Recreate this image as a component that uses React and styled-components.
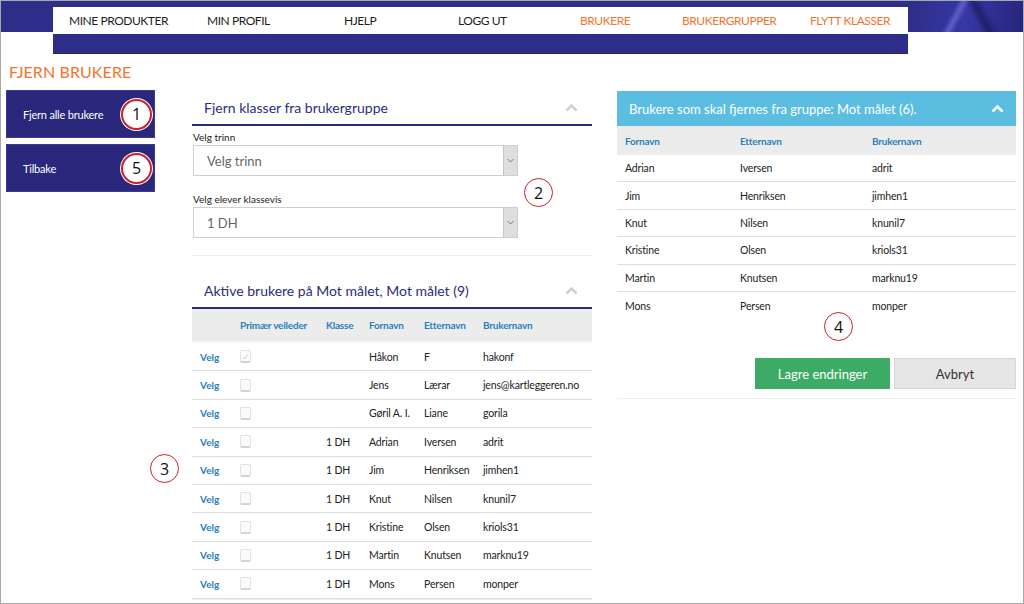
import styled, { createGlobalStyle } from "styled-components";

const GlobalStyle = createGlobalStyle`
  html, body {
    margin: 0;
    padding: 0;
    background: #fff;
  }
  * {
    box-sizing: border-box;
  }
`;

const NAV = [
  { label: "MINE PRODUKTER" },
  { label: "MIN PROFIL" },
  { label: "HJELP" },
  { label: "LOGG UT" },
  { label: "BRUKERE", active: true },
  { label: "BRUKERGRUPPER", active: true },
  { label: "FLYTT KLASSER", active: true },
];

const ACTIVE = [
  { checked: true, klasse: "", fornavn: "Håkon", etternavn: "F", brukernavn: "hakonf" },
  { klasse: "", fornavn: "Jens", etternavn: "Lærar", brukernavn: "jens@kartleggeren.no" },
  { klasse: "", fornavn: "Gøril A. I.", etternavn: "Liane", brukernavn: "gorila" },
  { klasse: "1 DH", fornavn: "Adrian", etternavn: "Iversen", brukernavn: "adrit" },
  { klasse: "1 DH", fornavn: "Jim", etternavn: "Henriksen", brukernavn: "jimhen1" },
  { klasse: "1 DH", fornavn: "Knut", etternavn: "Nilsen", brukernavn: "knunil7" },
  { klasse: "1 DH", fornavn: "Kristine", etternavn: "Olsen", brukernavn: "kriols31" },
  { klasse: "1 DH", fornavn: "Martin", etternavn: "Knutsen", brukernavn: "marknu19" },
  { klasse: "1 DH", fornavn: "Mons", etternavn: "Persen", brukernavn: "monper" },
];

const REMOVE = [
  ["Adrian", "Iversen", "adrit"],
  ["Jim", "Henriksen", "jimhen1"],
  ["Knut", "Nilsen", "knunil7"],
  ["Kristine", "Olsen", "kriols31"],
  ["Martin", "Knutsen", "marknu19"],
  ["Mons", "Persen", "monper"],
];

function ChevronUp({ color = "#d0d0d0" }) {
  return (
    <svg width="13" height="9" viewBox="0 0 13 9">
      <polyline
        points="1.5,7.5 6.5,2.5 11.5,7.5"
        fill="none"
        stroke={color}
        strokeWidth="2.6"
      />
    </svg>
  );
}

function Select({ value }) {
  return (
    <SelectBox>
      <SelectValue>{value}</SelectValue>
      <SelectArrow>
        <svg width="7" height="5" viewBox="0 0 7 5">
          <polyline points="0.5,1 3.5,4 6.5,1" fill="none" stroke="#777" strokeWidth="1" />
        </svg>
      </SelectArrow>
    </SelectBox>
  );
}

export default function App() {
  return (
    <>
      <GlobalStyle />
      <Page>
        <Header>
          <HeaderSide />
          <NavColumn>
            <Nav>
              {NAV.map((n) => (
                <NavItem key={n.label} $active={n.active}>
                  {n.label}
                </NavItem>
              ))}
            </Nav>
            <NavBar />
          </NavColumn>
          <HeaderArt />
        </Header>

        <Title>FJERN BRUKERE</Title>

        <Columns>
          <LeftColumn>
            <SideButton>
              <span>Fjern alle brukere</span>
              <Marker $big>1</Marker>
            </SideButton>
            <SideButton>
              <span>Tilbake</span>
              <Marker $big>5</Marker>
            </SideButton>
          </LeftColumn>

          <MiddleColumn>
            <Panel>
              <PanelHeader>
                <span>Fjern klasser fra brukergruppe</span>
                <ChevronUp />
              </PanelHeader>
              <PanelBody>
                <FieldLabel>Velg trinn</FieldLabel>
                <Select value="Velg trinn" />
                <FieldLabel $gap>Velg elever klassevis</FieldLabel>
                <Select value="1 DH" />
              </PanelBody>
            </Panel>

            <Panel $second>
              <PanelHeader>
                <span>Aktive brukere på Mot målet, Mot målet (9)</span>
                <ChevronUp />
              </PanelHeader>
              <ActiveHead>
                <span />
                <HeadCell>Primær veileder</HeadCell>
                <HeadCell>Klasse</HeadCell>
                <HeadCell>Fornavn</HeadCell>
                <HeadCell>Etternavn</HeadCell>
                <HeadCell>Brukernavn</HeadCell>
              </ActiveHead>
              {ACTIVE.map((r) => (
                <ActiveRow key={r.brukernavn}>
                  <VelgLink>Velg</VelgLink>
                  <Check>{r.checked ? "✓" : ""}</Check>
                  <Cell>{r.klasse}</Cell>
                  <Cell>{r.fornavn}</Cell>
                  <Cell>{r.etternavn}</Cell>
                  <Cell>{r.brukernavn}</Cell>
                </ActiveRow>
              ))}
            </Panel>
          </MiddleColumn>

          <RightColumn>
            <InfoPanel>
              <InfoHeader>
                <span>Brukere som skal fjernes fra gruppe: Mot målet (6).</span>
                <ChevronUp color="#fff" />
              </InfoHeader>
              <RemoveHead>
                <HeadCell>Fornavn</HeadCell>
                <HeadCell>Etternavn</HeadCell>
                <HeadCell>Brukernavn</HeadCell>
              </RemoveHead>
              <RemoveBody>
                {REMOVE.map((r) => (
                  <RemoveRow key={r[2]}>
                    {r.map((c) => (
                      <Cell key={c}>{c}</Cell>
                    ))}
                  </RemoveRow>
                ))}
              </RemoveBody>
              <Actions>
                <SaveButton>Lagre endringer</SaveButton>
                <CancelButton>Avbryt</CancelButton>
              </Actions>
            </InfoPanel>
          </RightColumn>
        </Columns>

        <FloatMarker style={{ left: 523, top: 177 }}>2</FloatMarker>
        <FloatMarker style={{ left: 149, top: 453 }}>3</FloatMarker>
        <FloatMarker style={{ left: 823, top: 311 }}>4</FloatMarker>
      </Page>
    </>
  );
}

const Page = styled.div`
  position: relative;
  width: 1024px;
  height: 604px;
  overflow: hidden;
  border: 1px solid #a8a8a8;
  font-family: Lato, "Open Sans", sans-serif;
  color: #222;
  background: #fff;
`;

const Header = styled.div`
  display: flex;
  height: 54px;
  margin-top: -1px;
`;

const HeaderSide = styled.div`
  width: 52px;
  height: 32px;
  background: #2e2d88;
`;

const NavColumn = styled.div`
  width: 855px;
  display: flex;
  flex-direction: column;
  background: linear-gradient(#2e2d88 0 7px, transparent 7px);
  padding-top: 7px;
`;

const Nav = styled.div`
  display: grid;
  grid-template-columns: 138px 137px 114px 122px 102px 128px auto;
  align-items: center;
  height: 27px;
  padding-left: 16px;
  background: #fff;
`;

const NavItem = styled.div`
  font-size: 12px;
  letter-spacing: -0.45px;
  color: ${(p) => (p.$active ? "#f3742d" : "#1e1e1e")};
`;

const NavBar = styled.div`
  height: 20px;
  background: #2e2d88;
  border-bottom: 1px solid #24236e;
`;

const HeaderArt = styled.div`
  flex: 1;
  height: 32px;
  background:
    linear-gradient(118deg, transparent 38%, rgba(120, 120, 225, 0.6) 43%, transparent 48%),
    linear-gradient(62deg, transparent 55%, rgba(20, 20, 80, 0.6) 62%, transparent 70%),
    linear-gradient(100deg, #2e2d88 0%, #3737a6 50%, #26257a 100%);
`;

const Title = styled.h1`
  margin: 0;
  height: 36px;
  display: flex;
  align-items: center;
  padding: 0 0 2px 8px;
  font-size: 16px;
  font-weight: 400;
  letter-spacing: 0.1px;
  color: #f3742d;
`;

const Columns = styled.div`
  display: flex;
  align-items: flex-start;
  padding-left: 5px;
`;

const LeftColumn = styled.div`
  width: 149px;
  display: flex;
  flex-direction: column;
  gap: 6px;
`;

const SideButton = styled.div`
  height: 48px;
  display: flex;
  align-items: center;
  justify-content: space-between;
  padding: 0 2px 0 16px;
  background: #29287c;
  color: #fff;
  font-size: 11px;
  letter-spacing: -0.2px;
  border: 1px solid #3b3a90;
`;

const Marker = styled.div`
  width: ${(p) => (p.$big ? 31 : 29)}px;
  height: ${(p) => (p.$big ? 31 : 29)}px;
  border-radius: 50%;
  border: 2px solid #c8202e;
  background: #fff;
  color: #111;
  display: flex;
  align-items: center;
  justify-content: center;
  font-family: "Open Sans", sans-serif;
  font-size: 16px;
  box-shadow: ${(p) => (p.$big ? "0 0 0 1px #fff" : "none")};
`;

const FloatMarker = styled(Marker)`
  position: absolute;
  border-width: 1.5px;
`;

const MiddleColumn = styled.div`
  width: 400px;
  margin-left: 37px;
  margin-top: 1px;
`;

const Panel = styled.div`
  margin-top: ${(p) => (p.$second ? 18 : 0)}px;
  border-bottom: 1px solid #eeeeee;
`;

const PanelHeader = styled.div`
  height: 35px;
  display: flex;
  align-items: center;
  justify-content: space-between;
  padding: 0 14px 0 12px;
  font-size: 14px;
  color: #2c2d7a;
  border-bottom: 2px solid #2c2d7a;
`;

const PanelBody = styled.div`
  padding: 4px 0 17px 1px;
`;

const FieldLabel = styled.div`
  font-size: 10px;
  color: #222;
  line-height: 14px;
  margin: ${(p) => (p.$gap ? "16px" : "0")} 0 1px;
`;

const SelectBox = styled.div`
  width: 325px;
  height: 31px;
  display: flex;
  border: 1px solid #cfcfcf;
  background: #fff;
`;

const SelectValue = styled.div`
  flex: 1;
  display: flex;
  align-items: center;
  padding-left: 13px;
  font-size: 13px;
  color: #666;
`;

const SelectArrow = styled.div`
  width: 14px;
  display: flex;
  align-items: center;
  justify-content: center;
  background: #dedede;
  border-left: 1px solid #c4c4c4;
`;

const ActiveHead = styled.div`
  display: grid;
  grid-template-columns: 40px 86px 43px 55px 59px 1fr;
  align-items: center;
  height: 34px;
  padding-left: 8px;
  background: #ececec;
  border-bottom: 2px solid #f6f6f6;
`;

const HeadCell = styled.div`
  font-size: 10px;
  font-weight: 700;
  color: #2b80b9;
  letter-spacing: -0.2px;
`;

const ActiveRow = styled.div`
  display: grid;
  grid-template-columns: 40px 86px 43px 55px 59px 1fr;
  align-items: center;
  height: 28.4px;
  padding-left: 8px;
  border-bottom: 1px solid #dddddd;
`;

const VelgLink = styled.div`
  font-size: 10px;
  font-weight: 700;
  color: #2b80b9;
`;

const Check = styled.div`
  width: 11px;
  height: 13px;
  border: 1px solid #e2e2e2;
  border-bottom: 2px solid #d4d4d4;
  border-radius: 2px;
  background: #fafafa;
  color: #d0d0d0;
  font-size: 9px;
  line-height: 11px;
  text-align: center;
`;

const Cell = styled.div`
  font-size: 10.5px;
  color: #222;
  letter-spacing: -0.15px;
  white-space: nowrap;
`;

const RightColumn = styled.div`
  width: 399px;
  margin-left: 25px;
  margin-top: 1px;
`;

const InfoPanel = styled.div`
  border-bottom: 1px solid #eeeeee;
  padding-bottom: 9px;
`;

const InfoHeader = styled.div`
  height: 35px;
  display: flex;
  align-items: center;
  justify-content: space-between;
  padding: 0 12px 0 12px;
  background: #5bbde0;
  color: #fff;
  font-size: 13px;
`;

const RemoveHead = styled.div`
  display: grid;
  grid-template-columns: 115px 132px 1fr;
  align-items: center;
  height: 29px;
  padding-left: 8px;
  background: #ececec;
`;

const RemoveBody = styled.div`
  display: flex;
  flex-direction: column;
`;

const RemoveRow = styled.div`
  display: grid;
  grid-template-columns: 115px 132px 1fr;
  align-items: center;
  height: 27.4px;
  padding-left: 8px;
  border-bottom: 1px solid #dddddd;

  &:last-child {
    border-bottom: none;
  }
`;

const Actions = styled.div`
  display: flex;
  justify-content: flex-end;
  gap: 4px;
  margin-top: 39px;
`;

const SaveButton = styled.button`
  width: 135px;
  height: 31px;
  border: none;
  background: #3dab66;
  color: #fff;
  font-family: Lato, sans-serif;
  font-size: 13px;
`;

const CancelButton = styled.button`
  width: 122px;
  height: 31px;
  border: 1px solid #d6d6d6;
  background: #e6e6e6;
  color: #333;
  font-family: Lato, sans-serif;
  font-size: 13px;
`;
